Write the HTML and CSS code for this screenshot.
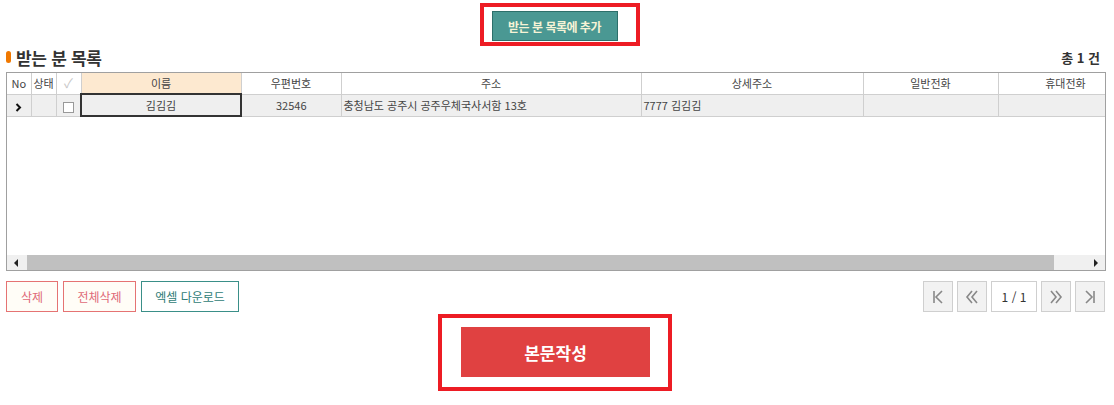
FILE: index.html
```html
<!DOCTYPE html>
<html lang="ko">
<head>
  <meta charset="UTF-8">
  <title>받는 분 목록</title>
  <link rel="stylesheet" href="styles.css">
</head>
<body>
  <div class="page">
    <div class="top-action">
      <div class="mark-box">
        <button type="button" class="btn-teal">받는 분 목록에 추가</button>
      </div>
    </div>

    <div class="title-row">
      <h2><span class="dot"></span>받는 분 목록</h2>
      <span class="total">총 1 건</span>
    </div>

    <div class="grid">
      <div class="grid-view">
        <table class="grid-table">
          <thead>
            <tr>
              <th class="c-no">No</th>
              <th class="c-st">상태</th>
              <th class="c-chk chk-head">&#10003;</th>
              <th class="c-name hl">이름</th>
              <th class="c-zip">우편번호</th>
              <th class="c-addr">주소</th>
              <th class="c-detail">상세주소</th>
              <th class="c-tel">일반전화</th>
              <th class="c-tel">휴대전화</th>
            </tr>
          </thead>
          <tbody>
            <tr class="sel">
              <td class="row-ind"><svg width="7" height="9" viewBox="0 0 7 9"><path d="M1.5 1l3.5 3.5-3.5 3.5" fill="none" stroke="#111" stroke-width="2"/></svg></td>
              <td></td>
              <td><span class="chk"></span></td>
              <td class="cur">김김김</td>
              <td>32546</td>
              <td class="left">충청남도 공주시 공주우체국사서함 13호</td>
              <td class="left">7777 김김김</td>
              <td></td>
              <td></td>
            </tr>
          </tbody>
        </table>
      </div>
      <div class="hscroll">
        <span class="arrow arrow-l"></span>
        <div class="track"><div class="thumb"></div></div>
        <span class="arrow arrow-r"></span>
      </div>
    </div>

    <div class="bottom-row">
      <div class="left-btns">
        <button type="button" class="btn-line red w-del">삭제</button>
        <button type="button" class="btn-line red w-all">전체삭제</button>
        <button type="button" class="btn-line teal">엑셀 다운로드</button>
      </div>
      <div class="pager">
        <button type="button" class="pg">
          <svg width="12" height="14" viewBox="0 0 12 14"><path d="M2 1v12M10 1L4 7l6 6" fill="none" stroke="#888" stroke-width="1.6"/></svg>
        </button>
        <button type="button" class="pg">
          <svg width="14" height="14" viewBox="0 0 14 14"><path d="M7 1L2 7l5 6M12 1L7 7l5 6" fill="none" stroke="#888" stroke-width="1.6"/></svg>
        </button>
        <span class="pg-num">1 / 1</span>
        <button type="button" class="pg">
          <svg width="14" height="14" viewBox="0 0 14 14"><path d="M2 1l5 6-5 6M7 1l5 6-5 6" fill="none" stroke="#888" stroke-width="1.6"/></svg>
        </button>
        <button type="button" class="pg">
          <svg width="12" height="14" viewBox="0 0 12 14"><path d="M2 1l6 6-6 6M10 1v12" fill="none" stroke="#888" stroke-width="1.6"/></svg>
        </button>
      </div>
    </div>

    <div class="main-action">
      <div class="mark-box big">
        <button type="button" class="btn-red">본문작성</button>
      </div>
    </div>
  </div>
</body>
</html>
```

FILE: styles.css
```css
body { margin: 0; background: #fff; font-family: "Noto Sans CJK KR", "Noto Sans", sans-serif; color: #333; }
.page { padding: 3px 8px 0 6px; }
button { font-family: inherit; cursor: pointer; }

.top-action { display: flex; justify-content: center; margin-left: 7px; }
.mark-box { border: 4px solid #ed1c24; padding: 4px 18px 1px 8px; }
.btn-teal { width: 126px; height: 30px; background: #4a9893; border: 1px solid #2c6f6a; color: #f6f3d6; font-size: 12px; font-weight: bold; letter-spacing: -0.5px; padding: 0; }

.title-row { display: flex; justify-content: space-between; align-items: center; height: 20px; margin: 1px 0 5px; }
.title-row h2 { margin: 0; font-size: 17px; font-weight: bold; color: #333; display: flex; align-items: center; gap: 5px; letter-spacing: -0.3px; }
.dot { width: 5px; height: 12px; border-radius: 3px; background: #f07800; }
.total { font-size: 13px; font-weight: bold; color: #333; margin-right: 6px; }

.grid { border: 1px solid #a0a0a0; width: 1098px; }
.grid-view { height: 182px; overflow: hidden; }
.grid-table { table-layout: fixed; border-collapse: collapse; width: 1126px; font-size: 11px; color: #444; }
.grid-table th, .grid-table td { height: 21px; line-height: 20px; padding: 0 2px; border-right: 1px solid #cfcfcf; border-bottom: 1px solid #cfcfcf; text-align: center; white-space: nowrap; overflow: hidden; font-weight: normal; box-sizing: border-box; }
.c-no { width: 24px; }
.c-st { width: 25px; }
.c-chk { width: 25px; }
.c-name { width: 160px; }
.c-zip { width: 100px; }
.c-addr { width: 300px; }
.c-detail { width: 222px; }
.c-tel { width: 135px; }
.grid-table th { background: #fff; }
.grid-table th.hl { background: #fde9d0; }
.grid-table th.chk-head { color: #c8c8c8; font-size: 13px; }
.grid-table tr.sel td { background: #efefef; }
.grid-table td.row-ind { background: #dcdcdc; }
.row-ind svg { vertical-align: middle; }
.grid-table td.cur { border: 2px solid #333; }
.grid-table td.left { text-align: left; }
.chk { display: inline-block; width: 9px; height: 9px; border: 1px solid #999; background: #fff; vertical-align: middle; }

.hscroll { display: flex; align-items: center; height: 15px; background: #f0f0f0; }
.arrow { width: 18px; height: 15px; display: flex; align-items: center; justify-content: center; }
.arrow-l::before { content: ""; border-right: 4px solid #222; border-top: 4px solid transparent; border-bottom: 4px solid transparent; }
.arrow-r::before { content: ""; border-left: 4px solid #222; border-top: 4px solid transparent; border-bottom: 4px solid transparent; }
.track { flex: 1; height: 15px; }
.thumb { width: 1027px; height: 15px; background: #c0c0c0; margin-left: 2px; }

.bottom-row { display: flex; justify-content: space-between; margin-top: 10px; }
.left-btns { display: flex; gap: 5px; }
.btn-line { height: 31px; padding: 0; font-size: 12px; background: #fffdf7; box-sizing: border-box; }
.btn-line.red { border: 1px solid #e57373; color: #e06a78; }
.w-del { width: 52px; }
.w-all { width: 73px; }
.btn-line.teal { width: 98px; border: 1px solid #3a8f88; color: #2f7c76; background: #fff; }
.pager { display: flex; gap: 4px; margin-right: 1px; }
.pg { width: 30px; height: 31px; border: 1px solid #cfcfcf; background: #f2f2f2; padding: 0; display: flex; align-items: center; justify-content: center; box-sizing: border-box; }
.pg-num { width: 44px; height: 29px; border: 1px solid #cfcfcf; background: #fff; font-size: 12px; color: #333; display: flex; align-items: center; justify-content: center; }

.main-action { display: flex; justify-content: center; margin-top: 2px; }
.mark-box.big { padding: 9px 18px 10px 19px; margin-left: -2px; }
.btn-red { width: 189px; height: 50px; background: #e04141; border: none; color: #fff; font-size: 17px; font-weight: bold; padding: 0; }
```
